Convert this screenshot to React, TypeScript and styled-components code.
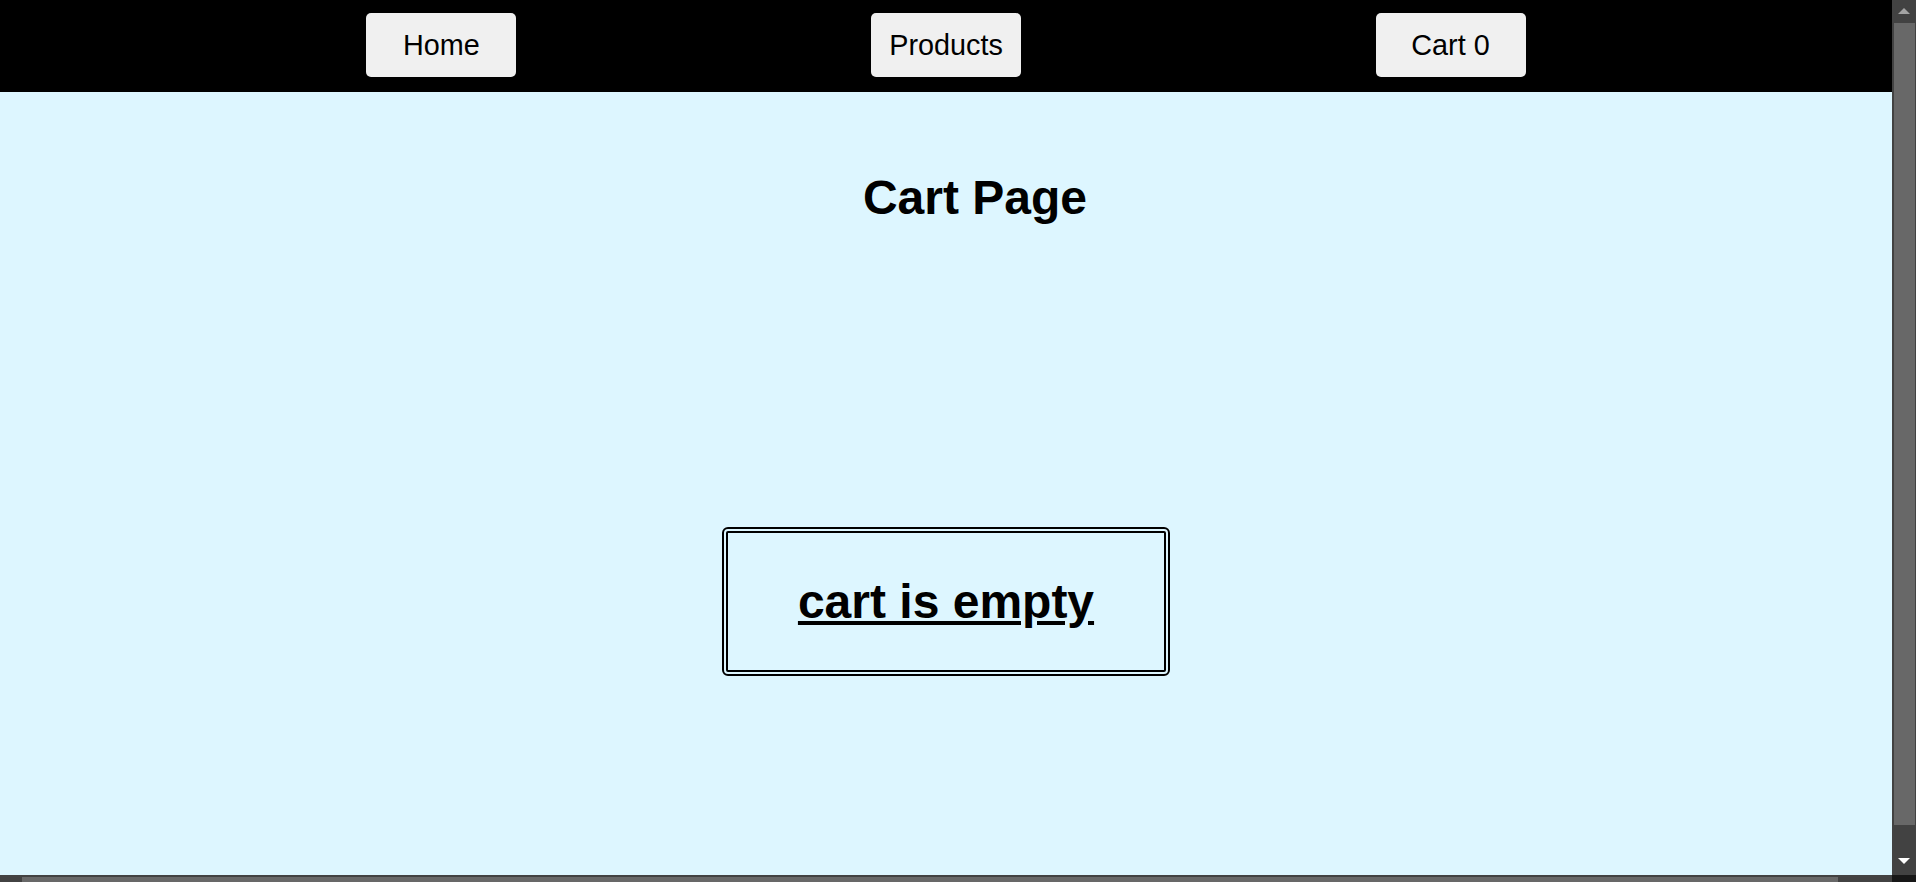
import React from "react";
import styled, { createGlobalStyle } from "styled-components";

const GlobalStyle = createGlobalStyle`
  html, body {
    margin: 0;
    padding: 0;
    overflow: hidden;
  }
  body {
    font-family: "Liberation Sans", Arial, sans-serif;
    background: #ddf6ff;
    color: #000;
  }
`;

/* Window frame: page viewport + the browser's scrollbars as seen in the shot */
const Shell = styled.div`
  width: 100vw;
  height: 100vh;
  display: grid;
  grid-template-columns: 1fr 24px;
  grid-template-rows: 1fr 7px;
`;

const Viewport = styled.div`
  overflow: hidden;
  background: #ddf6ff;
  min-width: 0;
`;

const VScroll = styled.div`
  background: #424242;
  display: flex;
  flex-direction: column;
`;

const ScrollButton = styled.div<{ $h: number }>`
  height: ${(p) => p.$h}px;
  flex: none;
  display: flex;
  justify-content: center;
  align-items: flex-start;
  padding-top: 8px;
  box-sizing: border-box;
`;

const ArrowUp = styled.span`
  width: 0;
  height: 0;
  border-left: 6px solid transparent;
  border-right: 6px solid transparent;
  border-bottom: 6px solid #a3a3a3;
`;

const ArrowDown = styled.span`
  width: 0;
  height: 0;
  margin-top: -1px;
  border-left: 6px solid transparent;
  border-right: 6px solid transparent;
  border-top: 6px solid #ffffff;
`;

const VTrack = styled.div`
  flex: 1;
  display: flex;
  flex-direction: column;
`;

const VThumb = styled.div`
  height: 802px;
  margin: 0 1px 0 2px;
  background: #686868;
`;

const HScroll = styled.div`
  background: #424242;
  display: flex;
  padding-left: 22px;
  padding-right: 54px;
  padding-top: 2px;
`;

const HThumb = styled.div`
  flex: 1;
  background: #686868;
`;

const Corner = styled.div`
  background: #171717;
`;

const NavBar = styled.nav`
  box-sizing: border-box;
  height: 92px;
  padding: 13px 0 15px;
  background: #000;
`;

const NavList = styled.ul`
  width: 80%;
  margin: 0 auto;
  padding: 0;
  list-style: none;
  display: flex;
  justify-content: space-around;
  align-items: center;
`;

const NavButton = styled.button`
  width: 150px;
  height: 64px;
  border: none;
  border-radius: 5px;
  background: #f0f0f0;
  color: #000;
  font-family: "Liberation Sans", Arial, sans-serif;
  font-size: 28.8px;
  padding: 0;
  cursor: pointer;
`;

const Main = styled.main`
  min-height: 811px;
  display: flow-root;
`;

const Heading = styled.h1`
  width: 100%;
  margin: 78px 0 0 29px;
  text-align: center;
  font-size: 48px;
  font-weight: 700;
  line-height: normal;
`;

const EmptyBox = styled.div`
  width: fit-content;
  margin: 302px auto 0;
  padding: 41px 70px;
  border: 6px double #000;
  border-radius: 6px;
`;

const EmptyText = styled.h2`
  margin: 0;
  font-size: 48px;
  font-weight: 700;
  line-height: normal;
  text-decoration: underline;
`;

export default function App() {
  const items = ["Home", "Products", "Cart 0"];
  return (
    <>
      <GlobalStyle />
      <Shell>
        <Viewport>
          <NavBar>
            <NavList>
              {items.map((label) => (
                <li key={label}>
                  <NavButton>{label}</NavButton>
                </li>
              ))}
            </NavList>
          </NavBar>
          <Main>
            <Heading>Cart Page</Heading>
            <EmptyBox>
              <EmptyText>cart is empty</EmptyText>
            </EmptyBox>
          </Main>
        </Viewport>
        <VScroll>
          <ScrollButton $h={23}>
            <ArrowUp />
          </ScrollButton>
          <VTrack>
            <VThumb />
          </VTrack>
          <ScrollButton $h={24}>
            <ArrowDown />
          </ScrollButton>
        </VScroll>
        <HScroll>
          <HThumb />
        </HScroll>
        <Corner />
      </Shell>
    </>
  );
}
